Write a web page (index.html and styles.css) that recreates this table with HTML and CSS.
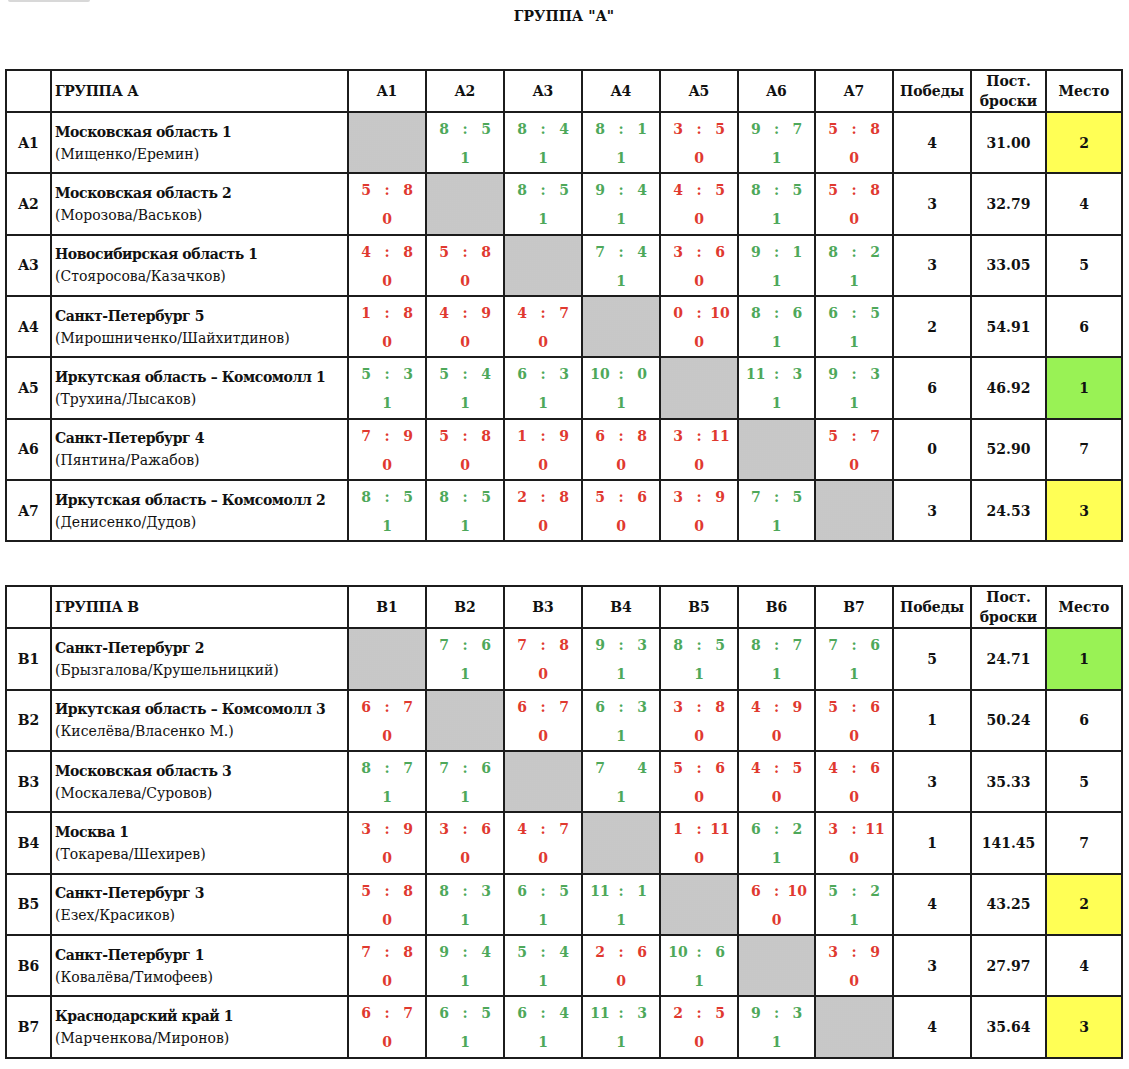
FILE: index.html
```html
<!DOCTYPE html>
<html lang="ru">
<head>
<meta charset="utf-8">
<title>Группа А</title>
<link rel="stylesheet" href="styles.css">
</head>
<body>
<div class="page">
  <div class="stub"></div>
  <div class="title">ГРУППА "А"</div>

  <table class="grid">
    <colgroup>
      <col class="c-id"><col class="c-name">
      <col class="c-sc"><col class="c-sc"><col class="c-sc"><col class="c-sc"><col class="c-sc"><col class="c-sc7"><col class="c-sc">
      <col class="c-win"><col class="c-throw"><col class="c-place">
    </colgroup>
    <thead>
      <tr class="head">
        <th></th><th class="gname">ГРУППА А</th>
        <th>A1</th><th>A2</th><th>A3</th><th>A4</th><th>A5</th><th>A6</th><th>A7</th>
        <th>Победы</th><th class="two">Пост.<br>броски</th><th>Место</th>
      </tr>
    </thead>
    <tbody>
      <tr>
        <td class="id">A1</td>
        <td class="name"><b>Московская область 1</b><br>(Мищенко/Еремин)</td>
        <td class="x"></td>
        <td class="sc w"><div class="s"><span>8</span><span>:</span><span>5</span></div><div class="p">1</div></td>
        <td class="sc w"><div class="s"><span>8</span><span>:</span><span>4</span></div><div class="p">1</div></td>
        <td class="sc w"><div class="s"><span>8</span><span>:</span><span>1</span></div><div class="p">1</div></td>
        <td class="sc l"><div class="s"><span>3</span><span>:</span><span>5</span></div><div class="p">0</div></td>
        <td class="sc w"><div class="s"><span>9</span><span>:</span><span>7</span></div><div class="p">1</div></td>
        <td class="sc l"><div class="s"><span>5</span><span>:</span><span>8</span></div><div class="p">0</div></td>
        <td class="num">4</td><td class="num">31.00</td><td class="num yellow">2</td>
      </tr>
      <tr>
        <td class="id">A2</td>
        <td class="name"><b>Московская область 2</b><br>(Морозова/Васьков)</td>
        <td class="sc l"><div class="s"><span>5</span><span>:</span><span>8</span></div><div class="p">0</div></td>
        <td class="x"></td>
        <td class="sc w"><div class="s"><span>8</span><span>:</span><span>5</span></div><div class="p">1</div></td>
        <td class="sc w"><div class="s"><span>9</span><span>:</span><span>4</span></div><div class="p">1</div></td>
        <td class="sc l"><div class="s"><span>4</span><span>:</span><span>5</span></div><div class="p">0</div></td>
        <td class="sc w"><div class="s"><span>8</span><span>:</span><span>5</span></div><div class="p">1</div></td>
        <td class="sc l"><div class="s"><span>5</span><span>:</span><span>8</span></div><div class="p">0</div></td>
        <td class="num">3</td><td class="num">32.79</td><td class="num">4</td>
      </tr>
      <tr>
        <td class="id">A3</td>
        <td class="name"><b>Новосибирская область 1</b><br>(Стояросова/Казачков)</td>
        <td class="sc l"><div class="s"><span>4</span><span>:</span><span>8</span></div><div class="p">0</div></td>
        <td class="sc l"><div class="s"><span>5</span><span>:</span><span>8</span></div><div class="p">0</div></td>
        <td class="x"></td>
        <td class="sc w"><div class="s"><span>7</span><span>:</span><span>4</span></div><div class="p">1</div></td>
        <td class="sc l"><div class="s"><span>3</span><span>:</span><span>6</span></div><div class="p">0</div></td>
        <td class="sc w"><div class="s"><span>9</span><span>:</span><span>1</span></div><div class="p">1</div></td>
        <td class="sc w"><div class="s"><span>8</span><span>:</span><span>2</span></div><div class="p">1</div></td>
        <td class="num">3</td><td class="num">33.05</td><td class="num">5</td>
      </tr>
      <tr>
        <td class="id">A4</td>
        <td class="name"><b>Санкт-Петербург 5</b><br>(Мирошниченко/Шайхитдинов)</td>
        <td class="sc l"><div class="s"><span>1</span><span>:</span><span>8</span></div><div class="p">0</div></td>
        <td class="sc l"><div class="s"><span>4</span><span>:</span><span>9</span></div><div class="p">0</div></td>
        <td class="sc l"><div class="s"><span>4</span><span>:</span><span>7</span></div><div class="p">0</div></td>
        <td class="x"></td>
        <td class="sc l"><div class="s"><span>0</span><span>:</span><span>10</span></div><div class="p">0</div></td>
        <td class="sc w"><div class="s"><span>8</span><span>:</span><span>6</span></div><div class="p">1</div></td>
        <td class="sc w"><div class="s"><span>6</span><span>:</span><span>5</span></div><div class="p">1</div></td>
        <td class="num">2</td><td class="num">54.91</td><td class="num">6</td>
      </tr>
      <tr>
        <td class="id">A5</td>
        <td class="name"><b>Иркутская область – Комсомолл 1</b><br>(Трухина/Лысаков)</td>
        <td class="sc w"><div class="s"><span>5</span><span>:</span><span>3</span></div><div class="p">1</div></td>
        <td class="sc w"><div class="s"><span>5</span><span>:</span><span>4</span></div><div class="p">1</div></td>
        <td class="sc w"><div class="s"><span>6</span><span>:</span><span>3</span></div><div class="p">1</div></td>
        <td class="sc w"><div class="s"><span>10</span><span>:</span><span>0</span></div><div class="p">1</div></td>
        <td class="x"></td>
        <td class="sc w"><div class="s"><span>11</span><span>:</span><span>3</span></div><div class="p">1</div></td>
        <td class="sc w"><div class="s"><span>9</span><span>:</span><span>3</span></div><div class="p">1</div></td>
        <td class="num">6</td><td class="num">46.92</td><td class="num green">1</td>
      </tr>
      <tr>
        <td class="id">A6</td>
        <td class="name"><b>Санкт-Петербург 4</b><br>(Пянтина/Ражабов)</td>
        <td class="sc l"><div class="s"><span>7</span><span>:</span><span>9</span></div><div class="p">0</div></td>
        <td class="sc l"><div class="s"><span>5</span><span>:</span><span>8</span></div><div class="p">0</div></td>
        <td class="sc l"><div class="s"><span>1</span><span>:</span><span>9</span></div><div class="p">0</div></td>
        <td class="sc l"><div class="s"><span>6</span><span>:</span><span>8</span></div><div class="p">0</div></td>
        <td class="sc l"><div class="s"><span>3</span><span>:</span><span>11</span></div><div class="p">0</div></td>
        <td class="x"></td>
        <td class="sc l"><div class="s"><span>5</span><span>:</span><span>7</span></div><div class="p">0</div></td>
        <td class="num">0</td><td class="num">52.90</td><td class="num">7</td>
      </tr>
      <tr>
        <td class="id">A7</td>
        <td class="name"><b>Иркутская область – Комсомолл 2</b><br>(Денисенко/Дудов)</td>
        <td class="sc w"><div class="s"><span>8</span><span>:</span><span>5</span></div><div class="p">1</div></td>
        <td class="sc w"><div class="s"><span>8</span><span>:</span><span>5</span></div><div class="p">1</div></td>
        <td class="sc l"><div class="s"><span>2</span><span>:</span><span>8</span></div><div class="p">0</div></td>
        <td class="sc l"><div class="s"><span>5</span><span>:</span><span>6</span></div><div class="p">0</div></td>
        <td class="sc l"><div class="s"><span>3</span><span>:</span><span>9</span></div><div class="p">0</div></td>
        <td class="sc w"><div class="s"><span>7</span><span>:</span><span>5</span></div><div class="p">1</div></td>
        <td class="x"></td>
        <td class="num">3</td><td class="num">24.53</td><td class="num yellow">3</td>
      </tr>
    </tbody>
  </table>

  <table class="grid second">
    <colgroup>
      <col class="c-id"><col class="c-name">
      <col class="c-sc"><col class="c-sc"><col class="c-sc"><col class="c-sc"><col class="c-sc"><col class="c-sc7"><col class="c-sc">
      <col class="c-win"><col class="c-throw"><col class="c-place">
    </colgroup>
    <thead>
      <tr class="head">
        <th></th><th class="gname">ГРУППА В</th>
        <th>B1</th><th>B2</th><th>B3</th><th>B4</th><th>B5</th><th>B6</th><th>B7</th>
        <th>Победы</th><th class="two">Пост.<br>броски</th><th>Место</th>
      </tr>
    </thead>
    <tbody>
      <tr>
        <td class="id">B1</td>
        <td class="name"><b>Санкт-Петербург 2</b><br>(Брызгалова/Крушельницкий)</td>
        <td class="x"></td>
        <td class="sc w"><div class="s"><span>7</span><span>:</span><span>6</span></div><div class="p">1</div></td>
        <td class="sc l"><div class="s"><span>7</span><span>:</span><span>8</span></div><div class="p">0</div></td>
        <td class="sc w"><div class="s"><span>9</span><span>:</span><span>3</span></div><div class="p">1</div></td>
        <td class="sc w"><div class="s"><span>8</span><span>:</span><span>5</span></div><div class="p">1</div></td>
        <td class="sc w"><div class="s"><span>8</span><span>:</span><span>7</span></div><div class="p">1</div></td>
        <td class="sc w"><div class="s"><span>7</span><span>:</span><span>6</span></div><div class="p">1</div></td>
        <td class="num">5</td><td class="num">24.71</td><td class="num green">1</td>
      </tr>
      <tr>
        <td class="id">B2</td>
        <td class="name"><b>Иркутская область – Комсомолл 3</b><br>(Киселёва/Власенко М.)</td>
        <td class="sc l"><div class="s"><span>6</span><span>:</span><span>7</span></div><div class="p">0</div></td>
        <td class="x"></td>
        <td class="sc l"><div class="s"><span>6</span><span>:</span><span>7</span></div><div class="p">0</div></td>
        <td class="sc w"><div class="s"><span>6</span><span>:</span><span>3</span></div><div class="p">1</div></td>
        <td class="sc l"><div class="s"><span>3</span><span>:</span><span>8</span></div><div class="p">0</div></td>
        <td class="sc l"><div class="s"><span>4</span><span>:</span><span>9</span></div><div class="p">0</div></td>
        <td class="sc l"><div class="s"><span>5</span><span>:</span><span>6</span></div><div class="p">0</div></td>
        <td class="num">1</td><td class="num">50.24</td><td class="num">6</td>
      </tr>
      <tr>
        <td class="id">B3</td>
        <td class="name"><b>Московская область 3</b><br>(Москалева/Суровов)</td>
        <td class="sc w"><div class="s"><span>8</span><span>:</span><span>7</span></div><div class="p">1</div></td>
        <td class="sc w"><div class="s"><span>7</span><span>:</span><span>6</span></div><div class="p">1</div></td>
        <td class="x"></td>
        <td class="sc w"><div class="s"><span>7</span><span></span><span>4</span></div><div class="p">1</div></td>
        <td class="sc l"><div class="s"><span>5</span><span>:</span><span>6</span></div><div class="p">0</div></td>
        <td class="sc l"><div class="s"><span>4</span><span>:</span><span>5</span></div><div class="p">0</div></td>
        <td class="sc l"><div class="s"><span>4</span><span>:</span><span>6</span></div><div class="p">0</div></td>
        <td class="num">3</td><td class="num">35.33</td><td class="num">5</td>
      </tr>
      <tr>
        <td class="id">B4</td>
        <td class="name"><b>Москва 1</b><br>(Токарева/Шехирев)</td>
        <td class="sc l"><div class="s"><span>3</span><span>:</span><span>9</span></div><div class="p">0</div></td>
        <td class="sc l"><div class="s"><span>3</span><span>:</span><span>6</span></div><div class="p">0</div></td>
        <td class="sc l"><div class="s"><span>4</span><span>:</span><span>7</span></div><div class="p">0</div></td>
        <td class="x"></td>
        <td class="sc l"><div class="s"><span>1</span><span>:</span><span>11</span></div><div class="p">0</div></td>
        <td class="sc w"><div class="s"><span>6</span><span>:</span><span>2</span></div><div class="p">1</div></td>
        <td class="sc l"><div class="s"><span>3</span><span>:</span><span>11</span></div><div class="p">0</div></td>
        <td class="num">1</td><td class="num">141.45</td><td class="num">7</td>
      </tr>
      <tr>
        <td class="id">B5</td>
        <td class="name"><b>Санкт-Петербург 3</b><br>(Езех/Красиков)</td>
        <td class="sc l"><div class="s"><span>5</span><span>:</span><span>8</span></div><div class="p">0</div></td>
        <td class="sc w"><div class="s"><span>8</span><span>:</span><span>3</span></div><div class="p">1</div></td>
        <td class="sc w"><div class="s"><span>6</span><span>:</span><span>5</span></div><div class="p">1</div></td>
        <td class="sc w"><div class="s"><span>11</span><span>:</span><span>1</span></div><div class="p">1</div></td>
        <td class="x"></td>
        <td class="sc l"><div class="s"><span>6</span><span>:</span><span>10</span></div><div class="p">0</div></td>
        <td class="sc w"><div class="s"><span>5</span><span>:</span><span>2</span></div><div class="p">1</div></td>
        <td class="num">4</td><td class="num">43.25</td><td class="num yellow">2</td>
      </tr>
      <tr>
        <td class="id">B6</td>
        <td class="name"><b>Санкт-Петербург 1</b><br>(Ковалёва/Тимофеев)</td>
        <td class="sc l"><div class="s"><span>7</span><span>:</span><span>8</span></div><div class="p">0</div></td>
        <td class="sc w"><div class="s"><span>9</span><span>:</span><span>4</span></div><div class="p">1</div></td>
        <td class="sc w"><div class="s"><span>5</span><span>:</span><span>4</span></div><div class="p">1</div></td>
        <td class="sc l"><div class="s"><span>2</span><span>:</span><span>6</span></div><div class="p">0</div></td>
        <td class="sc w"><div class="s"><span>10</span><span>:</span><span>6</span></div><div class="p">1</div></td>
        <td class="x"></td>
        <td class="sc l"><div class="s"><span>3</span><span>:</span><span>9</span></div><div class="p">0</div></td>
        <td class="num">3</td><td class="num">27.97</td><td class="num">4</td>
      </tr>
      <tr>
        <td class="id">B7</td>
        <td class="name"><b>Краснодарский край 1</b><br>(Марченкова/Миронов)</td>
        <td class="sc l"><div class="s"><span>6</span><span>:</span><span>7</span></div><div class="p">0</div></td>
        <td class="sc w"><div class="s"><span>6</span><span>:</span><span>5</span></div><div class="p">1</div></td>
        <td class="sc w"><div class="s"><span>6</span><span>:</span><span>4</span></div><div class="p">1</div></td>
        <td class="sc w"><div class="s"><span>11</span><span>:</span><span>3</span></div><div class="p">1</div></td>
        <td class="sc l"><div class="s"><span>2</span><span>:</span><span>5</span></div><div class="p">0</div></td>
        <td class="sc w"><div class="s"><span>9</span><span>:</span><span>3</span></div><div class="p">1</div></td>
        <td class="x"></td>
        <td class="num">4</td><td class="num">35.64</td><td class="num yellow">3</td>
      </tr>
    </tbody>
  </table>
</div>
</body>
</html>
```

FILE: styles.css
```css
html, body {
  margin: 0;
  padding: 0;
  background: #ffffff;
}

body {
  font-family: "DejaVu Serif", "Liberation Serif", serif;
  color: #111111;
  font-size: 14px;
}

.page {
  padding-left: 5px;
  width: 1118px;
}

.stub {
  width: 82px;
  height: 2px;
  margin-left: 3px;
  background: #d8d8d8;
  border-radius: 0 0 3px 3px;
}

.title {
  height: 67px;
  box-sizing: border-box;
  padding-top: 4px;
  line-height: 20px;
  text-align: center;
  font-weight: bold;
  font-size: 14px;
}

.grid {
  border-collapse: collapse;
  table-layout: fixed;
  width: 1118px;
}

.grid.second {
  margin-top: 43px;
}

.c-id { width: 45px; }
.c-name { width: 297px; }
.c-sc { width: 78px; }
.c-sc7 { width: 77px; }
.c-win { width: 78px; }
.c-throw { width: 75px; }
.c-place { width: 76px; }

.grid th,
.grid td {
  border: 2px solid #1c1c1c;
  padding: 0;
}

.head {
  height: 42px;
}

.head th {
  font-weight: bold;
  text-align: center;
  vertical-align: middle;
  font-size: 14px;
}

.head th.gname {
  text-align: left;
  padding-left: 3px;
  letter-spacing: -0.3px;
}

.head th.two {
  line-height: 20px;
}

tbody tr {
  height: 61.35px;
}

td.id {
  text-align: center;
  font-weight: bold;
  vertical-align: middle;
}

td.name {
  padding-left: 3px;
  line-height: 22px;
  vertical-align: middle;
  white-space: nowrap;
}

td.name b {
  letter-spacing: -0.4px;
}

td.sc {
  vertical-align: top;
  font-weight: bold;
  padding-top: 1px;
}

td.sc.w { color: #4ea85a; }
td.sc.l { color: #e0392f; }

.s {
  display: grid;
  grid-template-columns: 1fr 10px 1fr;
  line-height: 30px;
  text-align: center;
  padding: 0 1px;
}

.p {
  text-align: center;
  line-height: 28px;
}

td.x {
  background-color: #d0d0d0;
  background-image: radial-gradient(circle, #bcbcbc 0.6px, transparent 0.8px);
  background-size: 2px 2px;
}

td.num {
  text-align: center;
  vertical-align: middle;
  font-weight: bold;
}

td.yellow { background: #ffff55; }
td.green { background: #99f255; }
```
